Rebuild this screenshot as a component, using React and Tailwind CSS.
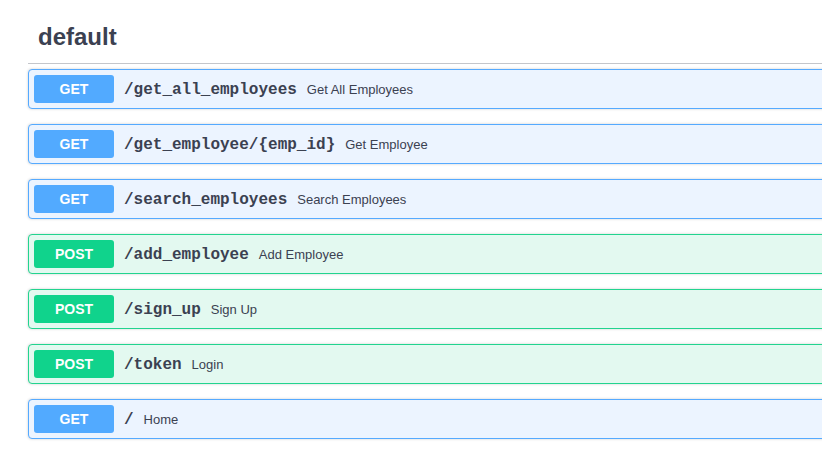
import React from 'react';

const ops = [
    { method: 'GET', path: '/get_all_employees', summary: 'Get All Employees' },
    { method: 'GET', path: '/get_employee/{emp_id}', summary: 'Get Employee' },
    { method: 'GET', path: '/search_employees', summary: 'Search Employees' },
    { method: 'POST', path: '/add_employee', summary: 'Add Employee' },
    { method: 'POST', path: '/sign_up', summary: 'Sign Up' },
    { method: 'POST', path: '/token', summary: 'Login' },
    { method: 'GET', path: '/', summary: 'Home' },
];

const styles = {
    GET: {
        block: 'border-[#55aaff] bg-[#ecf4ff]',
        badge: 'bg-[#52aaff]',
    },
    POST: {
        block: 'border-[#22d48f] bg-[#e3f9f0]',
        badge: 'bg-[#10d38c]',
    },
};

function OpBlock({ method, path, summary }) {
    const s = styles[method];
    return (
        <div className={`mb-[15px] flex h-[40px] items-center rounded-[4px] border p-[5px] shadow-[0_0_3px_rgba(0,0,0,0.19)] ${s.block}`}>
            <span className={`w-[80px] rounded-[3px] py-[6px] text-center text-[14px] font-bold leading-[16px] text-white ${s.badge}`}>
                {method}
            </span>
            <span className="px-[10px] pt-[1px] font-['Liberation_Mono',monospace] text-[16px] font-bold text-[#3b4151]">
                {path}
            </span>
            <span className="pt-[1px] text-[13px] text-[#3b4151]">{summary}</span>
        </div>
    );
}

export default function App() {
    return (
        <div className="h-[476px] w-[822px] overflow-hidden bg-white font-['Liberation_Sans',Arial,sans-serif]">
            <div className="w-[830px] pl-[28px]">
                <h3 className="mb-[5px] border-b border-[#c4c6cb] pb-[8px] pl-[10px] pt-[19px] text-[24px] font-bold leading-[36px] text-[#3b4151]">
                    default
                </h3>
                {ops.map((op) => (
                    <OpBlock key={op.path} {...op} />
                ))}
            </div>
        </div>
    );
}
